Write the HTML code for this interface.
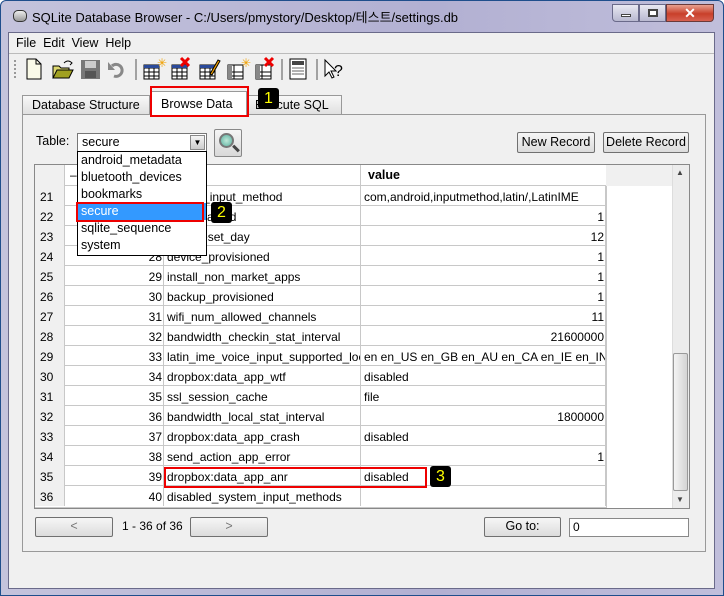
<!DOCTYPE html>
<html><head><meta charset="utf-8"><style>
*{box-sizing:border-box;margin:0;padding:0}
body{width:724px;height:596px;overflow:hidden;background:#fff;font-family:"Liberation Sans","Noto Sans CJK KR",sans-serif;font-size:12px;color:#000;position:relative}
.a{position:absolute}
.btn{position:absolute;background:linear-gradient(#f6f6f6,#dcdcdc);border:1px solid #707070;border-radius:2px;text-align:center;font-size:12.5px}
.row{position:absolute;left:35px;height:20px;width:571px;border-bottom:1px solid #c8c8c8}
.row div{position:absolute;top:0;height:20px;line-height:22px;white-space:nowrap;overflow:hidden;font-size:12px}
.c0{left:0;width:30px;background:#f0f0f0;border-right:1px solid #c8c8c8;padding-left:5px}
.c1{left:30px;width:99px;text-align:right;border-right:1px solid #c8c8c8;padding-right:1px}
.c2{left:129px;width:197px;border-right:1px solid #c8c8c8;padding-left:3px}
.c3{left:326px;width:245px;border-right:1px solid #c8c8c8;padding:0 1px 0 3px}
.r{text-align:right}
.badge{position:absolute;background:#000;color:#ff0;border-radius:3px;width:21px;height:21px;text-align:center;line-height:21px;font-size:16px}
</style></head><body>
<div class="a" style="left:0;top:0;width:724px;height:596px;background:linear-gradient(90deg,#c4c3dc,#b2b0d2 60%,#c0bedb);border:1px solid #1f4e8c;border-radius:6px 6px 0 0"></div>
<div class="a" style="left:13px;top:10px;width:14px;height:12px;border:1px solid #333;border-radius:5px;background:linear-gradient(#eee,#999)"></div>
<div class="a" style="left:32px;top:7px;font-size:13px;color:#000">SQLite Database Browser - C:/Users/pmystory/Desktop/테스트/settings.db</div>
<div class="a" style="left:612px;top:4px;width:27px;height:18px;border:1px solid #6a6a8a;border-radius:0 0 0 4px;background:linear-gradient(#e8e8f2,#b8b8d0)"><div class="a" style="left:8px;top:9px;width:10px;height:3px;background:#fff;border:1px solid #444"></div></div>
<div class="a" style="left:639px;top:4px;width:27px;height:18px;border:1px solid #6a6a8a;background:linear-gradient(#e8e8f2,#b8b8d0)"><div class="a" style="left:8px;top:4px;width:10px;height:8px;background:#fff;border:2px solid #444"></div></div>
<div class="a" style="left:666px;top:4px;width:48px;height:18px;border:1px solid #6a3a3a;border-radius:0 0 4px 0;background:linear-gradient(#e8a090,#c8402a 55%,#d86050);color:#fff;font-weight:bold;text-align:center;font-size:14px;line-height:16px">✕</div>
<div class="a" style="left:8px;top:32px;width:707px;height:557px;background:#f0f0f0;border:1px solid #6a6a8a"></div>
<div class="a" style="left:16px;top:36px;font-size:12.5px">File&nbsp;&nbsp;Edit&nbsp;&nbsp;View&nbsp;&nbsp;Help</div>
<div class="a" style="left:9px;top:53px;width:705px;height:1px;background:#bbb"></div>
<div class="a" style="left:14px;top:60px;width:2px;height:18px;border-left:2px dotted #999"></div>
<svg class="a" style="left:20px;top:56px" width="330" height="26">
<path d="M7 3h9l5 5v15H7z" fill="#fafae8" stroke="#000"/><path d="M16 3v5h5" fill="none" stroke="#000"/>
<path d="M33 10h6l2 2h8v10H33z" fill="#ddd870" stroke="#000"/><path d="M33 22l4-8h16l-4 8z" fill="#a0a020" stroke="#000"/><path d="M44 7q4-4 8 0l-2 2" fill="none" stroke="#000"/>
<rect x="61" y="4" width="19" height="19" fill="#777"/><rect x="65" y="5" width="11" height="7" fill="#ccc"/><rect x="65" y="15" width="11" height="7" fill="#555"/>
<path d="M92 10a6 6 0 1 1 2 10" fill="none" stroke="#888" stroke-width="3"/><path d="M88 6v8h7" fill="#888"/>
<line x1="116" y1="3" x2="116" y2="24" stroke="#555"/>
<g fill="#fff" stroke="#000"><rect x="124" y="9" width="15" height="14"/><rect x="152" y="9" width="15" height="14"/><rect x="180" y="9" width="15" height="14"/><rect x="208" y="9" width="15" height="14"/><rect x="236" y="9" width="15" height="14"/></g>
<g stroke="#000" stroke-width="1"><path d="M124 12h15M124 16h15M124 20h15M129 9v14M134 9v14M152 12h15M152 16h15M152 20h15M157 9v14M162 9v14M180 12h15M180 16h15M180 20h15M185 9v14M190 9v14M208 16h15M208 20h15M214 9v14M236 16h15M236 20h15M242 9v14"/></g>
<rect x="124" y="9" width="15" height="3" fill="#2a4a9a"/><rect x="152" y="9" width="15" height="3" fill="#2a4a9a"/><rect x="180" y="9" width="15" height="3" fill="#2a4a9a"/><rect x="208" y="9" width="4" height="14" fill="#888"/><rect x="236" y="9" width="4" height="14" fill="#888"/>
<text x="137" y="11" fill="#f0a000" font-size="12">✳</text><text x="221" y="11" fill="#f0a000" font-size="12">✳</text>
<path d="M161 2l8 8M169 2l-8 8M245 2l8 8M253 2l-8 8" stroke="#e00" stroke-width="3"/>
<path d="M190 18l8-14 2 1-8 14z" fill="#f0a000" stroke="#000"/>
<line x1="262" y1="3" x2="262" y2="24" stroke="#555"/>
<rect x="270" y="3" width="16" height="20" fill="#fff" stroke="#000"/><rect x="272" y="5" width="12" height="4" fill="#444"/><path d="M272 12h12M272 15h12M272 18h12" stroke="#666"/>
<line x1="297" y1="3" x2="297" y2="24" stroke="#555"/>
<path d="M305 4v16l4-4 3 6 2-1-3-6h5z" fill="#fff" stroke="#000"/><text x="314" y="20" font-size="16" font-family="Liberation Sans">?</text>
</svg>
<div class="a" style="left:22px;top:95px;width:128px;height:20px;border:1px solid #999;background:linear-gradient(#f8f8f8,#e0e0e0);padding:2px 0 0 9px;font-size:12.5px">Database Structure</div>
<div class="a" style="left:246px;top:95px;width:96px;height:20px;border:1px solid #999;background:linear-gradient(#f8f8f8,#e0e0e0);padding:2px 0 0 8px;font-size:12.5px">Execute SQL</div>
<div class="a" style="left:22px;top:114px;width:684px;height:438px;border:1px solid #999;background:#f0f0f0"></div>
<div class="a" style="left:151px;top:91px;width:96px;height:25px;background:#fff;border:1px solid #999;border-bottom:none;padding:5px 0 0 9px;font-size:12.5px">Browse Data</div>
<div class="a" style="left:150px;top:86px;width:99px;height:31px;border:2px solid #e00"></div>
<div class="badge" style="left:258px;top:88px">1</div>
<div class="a" style="left:36px;top:134px;font-size:12.5px">Table:</div>
<div class="a" style="left:77px;top:133px;width:130px;height:19px;background:#fff;border:1px solid #777;padding:1px 0 0 4px;font-size:12.5px">secure</div>
<div class="a" style="left:190px;top:135px;width:15px;height:15px;background:linear-gradient(#f4f4f4,#ccc);border:1px solid #888;text-align:center;font-size:8px;line-height:14px">▼</div>
<div class="a" style="left:214px;top:129px;width:28px;height:28px;border:1px solid #888;border-radius:2px;background:linear-gradient(#f6f6f6,#d8d8d8)"><div class="a" style="left:4px;top:3px;width:15px;height:15px;border-radius:50%;border:2px solid #777;background:radial-gradient(#bfe8d8,#5ab0a0)"></div><div class="a" style="left:17px;top:17px;width:8px;height:3px;background:#444;transform:rotate(45deg)"></div></div>
<div class="btn" style="left:517px;top:132px;width:78px;height:21px;line-height:18px">New Record</div>
<div class="btn" style="left:603px;top:132px;width:86px;height:21px;line-height:18px">Delete Record</div>
<div class="a" style="left:34px;top:164px;width:656px;height:345px;border:1px solid #888;background:#fff"></div>
<div class="a" style="left:35px;top:165px;width:571px;height:21px;background:#fff;border-bottom:1px solid #c8c8c8"></div>
<div class="a" style="left:35px;top:165px;width:30px;height:21px;background:#f0f0f0;border-right:1px solid #c8c8c8"></div>
<div class="a" style="left:606px;top:165px;width:66px;height:21px;background:#f0f0f0"></div>
<div class="a" style="left:65px;top:165px;width:99px;height:21px;border-right:1px solid #c8c8c8;padding:3px 0 0 5px">–</div>
<div class="a" style="left:164px;top:165px;width:197px;height:21px;border-right:1px solid #c8c8c8"></div>
<div class="a" style="left:368px;top:168px;font-weight:bold;font-size:12.5px">value</div>
<div class="a" style="left:606px;top:186px;width:1px;height:322px;background:#c8c8c8"></div>
<div class="row" style="top:186px"><div class="c0">21</div><div class="c1">20</div><div class="c2">default_input_method</div><div class="c3">com,android,inputmethod,latin/,LatinIME</div></div>
<div class="row" style="top:206px"><div class="c0">22</div><div class="c1">24</div><div class="c2">adb_enabled</div><div class="c3 r">1</div></div>
<div class="row" style="top:226px"><div class="c0">23</div><div class="c1">27</div><div class="c2">data_reset_day</div><div class="c3 r">12</div></div>
<div class="row" style="top:246px"><div class="c0">24</div><div class="c1">28</div><div class="c2">device_provisioned</div><div class="c3 r">1</div></div>
<div class="row" style="top:266px"><div class="c0">25</div><div class="c1">29</div><div class="c2">install_non_market_apps</div><div class="c3 r">1</div></div>
<div class="row" style="top:286px"><div class="c0">26</div><div class="c1">30</div><div class="c2">backup_provisioned</div><div class="c3 r">1</div></div>
<div class="row" style="top:306px"><div class="c0">27</div><div class="c1">31</div><div class="c2">wifi_num_allowed_channels</div><div class="c3 r">11</div></div>
<div class="row" style="top:326px"><div class="c0">28</div><div class="c1">32</div><div class="c2">bandwidth_checkin_stat_interval</div><div class="c3 r">21600000</div></div>
<div class="row" style="top:346px"><div class="c0">29</div><div class="c1">33</div><div class="c2">latin_ime_voice_input_supported_locales</div><div class="c3">en en_US en_GB en_AU en_CA en_IE en_IN</div></div>
<div class="row" style="top:366px"><div class="c0">30</div><div class="c1">34</div><div class="c2">dropbox:data_app_wtf</div><div class="c3">disabled</div></div>
<div class="row" style="top:386px"><div class="c0">31</div><div class="c1">35</div><div class="c2">ssl_session_cache</div><div class="c3">file</div></div>
<div class="row" style="top:406px"><div class="c0">32</div><div class="c1">36</div><div class="c2">bandwidth_local_stat_interval</div><div class="c3 r">1800000</div></div>
<div class="row" style="top:426px"><div class="c0">33</div><div class="c1">37</div><div class="c2">dropbox:data_app_crash</div><div class="c3">disabled</div></div>
<div class="row" style="top:446px"><div class="c0">34</div><div class="c1">38</div><div class="c2">send_action_app_error</div><div class="c3 r">1</div></div>
<div class="row" style="top:466px"><div class="c0">35</div><div class="c1">39</div><div class="c2">dropbox:data_app_anr</div><div class="c3">disabled</div></div>
<div class="row" style="top:486px;height:22px"><div class="c0">36</div><div class="c1">40</div><div class="c2">disabled_system_input_methods</div><div class="c3"></div></div>
<div class="a" style="left:164px;top:467px;width:263px;height:21px;border:2px solid #e00"></div>
<div class="badge" style="left:430px;top:466px">3</div>
<div class="a" style="left:672px;top:165px;width:17px;height:343px;background:#ececec;border-left:1px solid #ddd"></div>
<div class="a" style="left:676px;top:168px;font-size:8px;color:#444">▲</div>
<div class="a" style="left:676px;top:495px;font-size:8px;color:#444">▼</div>
<div class="a" style="left:673px;top:353px;width:15px;height:138px;border:1px solid #999;border-radius:2px;background:linear-gradient(90deg,#f4f4f4,#d4d4d4)"></div>
<div class="a" style="left:77px;top:151px;width:130px;height:105px;background:#fff;border:1px solid #000;font-size:12.5px;line-height:17px;padding:0 0 0 3px">android_metadata<br>bluetooth_devices<br>bookmarks<br><span style="display:block;margin-left:-3px;width:128px;background:#3399ff;color:#fff;padding-left:3px">secure</span>sqlite_sequence<br>system</div>
<div class="a" style="left:76px;top:202px;width:128px;height:20px;border:2px solid #e00"></div>
<div class="badge" style="left:211px;top:202px">2</div>
<div class="btn" style="left:35px;top:517px;width:78px;height:20px;line-height:17px;color:#777">&lt;</div>
<div class="a" style="left:122px;top:519px;font-size:12px">1 - 36 of 36</div>
<div class="btn" style="left:190px;top:517px;width:78px;height:20px;line-height:17px;color:#777">&gt;</div>
<div class="btn" style="left:484px;top:517px;width:77px;height:20px;line-height:17px">Go to:</div>
<div class="a" style="left:569px;top:518px;width:120px;height:19px;border:1px solid #888;background:#fff;padding:1px 0 0 3px">0</div>
</body></html>
